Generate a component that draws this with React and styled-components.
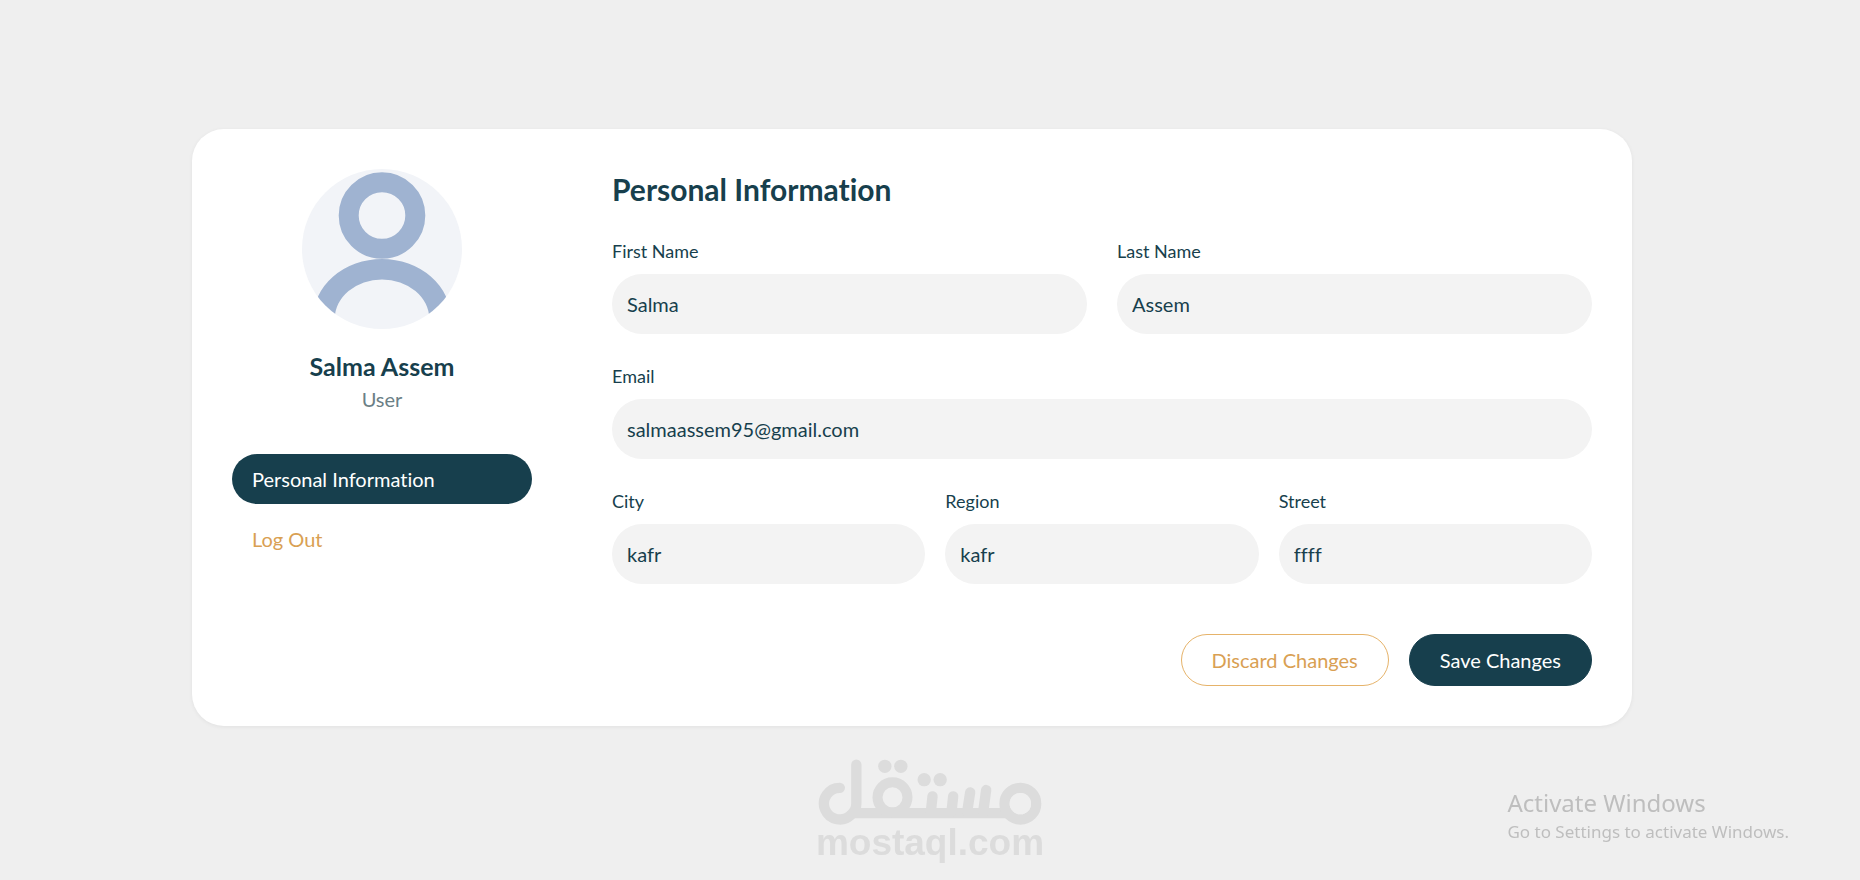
import React from "react";
import styled, { createGlobalStyle, css } from "styled-components";

const GlobalStyle = createGlobalStyle`
  *, *::before, *::after { box-sizing: border-box; }
  body {
    margin: 0;
    background: #efefef;
    color: #173f4d;
    font-family: Lato, "Liberation Sans", sans-serif;
    font-variant-ligatures: none;
  }
  button, input {
    font-family: inherit;
    font-variant-ligatures: inherit;
  }
`;

const Page = styled.main`
  min-height: 100vh;
  padding: 129px 36px 129px 0;
  display: flex;
  justify-content: center;
  align-items: flex-start;
`;

const Card = styled.section`
  display: flex;
  gap: 80px;
  width: 100%;
  max-width: 1440px;
  padding: 40px;
  background: #fff;
  border-radius: 32px;
  box-shadow: 0 1px 4px rgba(0, 0, 0, 0.06);
`;

const Sidebar = styled.aside`
  flex: 0 0 300px;
  display: flex;
  flex-direction: column;
  align-items: center;
`;

const Avatar = styled.svg`
  width: 160px;
  height: 160px;
  margin-bottom: 20px;
`;

const UserName = styled.h2`
  margin: 0;
  font-size: 25px;
  line-height: 35px;
  font-weight: 700;
`;

const UserRole = styled.p`
  margin: 0 0 40px;
  font-size: 20px;
  line-height: 30px;
  color: #6b7f86;
`;

const Nav = styled.nav`
  width: 100%;
  display: flex;
  flex-direction: column;
  gap: 10px;
`;

const NavButton = styled.button`
  height: 50px;
  padding: 0 20px;
  border: 0;
  border-radius: 25px;
  background: ${(p) => (p.$active ? "#173f4d" : "transparent")};
  color: ${(p) => (p.$active ? "#fff" : "#d9a053")};
  font-size: 20px;
  line-height: 30px;
  text-align: left;
  cursor: pointer;
`;

const Form = styled.form`
  flex: 1;
  min-width: 0;
  display: flex;
  flex-direction: column;
`;

const Title = styled.h1`
  margin: 0 0 30px;
  font-size: 30px;
  line-height: 40px;
  font-weight: 700;
`;

const Fields = styled.div`
  display: flex;
  flex-direction: column;
  gap: 30px;
`;

const FieldRow = styled.div`
  display: grid;
  grid-template-columns: repeat(${(p) => p.$columns}, minmax(0, 1fr));
  gap: ${(p) => p.$gap || 0}px;
`;

const Field = styled.div`
  display: flex;
  flex-direction: column;
  gap: 10px;
`;

const Label = styled.label`
  font-size: 18px;
  line-height: 25px;
`;

const Input = styled.input`
  width: 100%;
  height: 60px;
  padding: 0 15px;
  border: 0;
  border-radius: 30px;
  outline: 0;
  background: #f3f3f3;
  color: inherit;
  font-size: 20px;
  line-height: 30px;
`;

const Actions = styled.div`
  display: flex;
  justify-content: flex-end;
  gap: 20px;
  margin-top: 50px;
`;

const ActionButton = styled.button`
  height: 52px;
  padding: 0 30px;
  border: 1px solid #e6b36a;
  border-radius: 26px;
  background: #fff;
  color: #d9a053;
  font-size: 20px;
  line-height: 30px;
  cursor: pointer;
  ${(p) =>
    p.$primary &&
    css`
      border-color: #173f4d;
      background: #173f4d;
      color: #fff;
    `}
`;

const Watermark = styled.div`
  position: fixed;
  left: 0;
  right: 0;
  bottom: 19px;
  display: flex;
  flex-direction: column;
  align-items: center;
  color: #dcdcdc;
  pointer-events: none;
`;

const WatermarkLogo = styled.svg`
  width: 224px;
  height: 66px;
`;

const WatermarkText = styled.span`
  font: 700 37px/36px "Liberation Sans", sans-serif;
`;

const SystemNotice = styled.div`
  position: fixed;
  right: 71px;
  bottom: 35px;
  font-family: "Noto Sans", "Open Sans", sans-serif;
  color: #bebebe;
  pointer-events: none;
`;

const NoticeTitle = styled.p`
  margin: 0;
  font-size: 24px;
  line-height: 32px;
`;

const NoticeText = styled.p`
  margin: 0;
  font-size: 17px;
  line-height: 26px;
`;

function TextField({ id, label, type = "text", value }) {
  return (
    <Field>
      <Label htmlFor={id}>{label}</Label>
      <Input id={id} type={type} defaultValue={value} />
    </Field>
  );
}

function UserAvatar() {
  return (
    <Avatar viewBox="0 0 160 160" role="img" aria-label="Profile picture">
      <defs>
        <clipPath id="avatar-clip">
          <circle cx="80" cy="80" r="80" />
        </clipPath>
      </defs>
      <circle cx="80" cy="80" r="80" fill="#f2f4f8" />
      <g clipPath="url(#avatar-clip)">
        <circle cx="80" cy="46.5" r="33.3" fill="none" stroke="#9fb3d1" strokeWidth="20" />
        <path
          d="M11 150A69 60 0 0 1 149 150H127.300A47.300 39.600 0 0 0 32.700 150Z"
          fill="#9fb3d1"
        />
      </g>
    </Avatar>
  );
}

function MostaqlLogo() {
  return (
    <WatermarkLogo viewBox="54 56 669 198" aria-hidden="true">
      <g fill="none" stroke="currentColor" strokeWidth="31" strokeLinecap="round" strokeLinejoin="round">
        <path d="M118 142.500A47.500 47.500 0 1 0 152 223Q167.500 208 167.500 190V73" />
        <path d="M150 218.500H640" strokeLinecap="butt" />
        <circle cx="276" cy="171" r="45" strokeWidth="30" />
        <circle cx="659.500" cy="190" r="47.500" />
        <path d="M396 168L391 215M458 168L453 215M509 156L500 215M557 149L548 215" />
      </g>
      <g fill="currentColor">
        <circle cx="253" cy="78" r="20" />
        <circle cx="301" cy="78" r="20" />
        <circle cx="371" cy="118" r="20" />
        <circle cx="419" cy="118" r="20" />
      </g>
      <circle cx="659.500" cy="190" r="32" fill="#efefef" />
    </WatermarkLogo>
  );
}

export default function App() {
  return (
    <>
      <GlobalStyle />
      <Page>
        <Card>
          <Sidebar>
            <UserAvatar />
            <UserName>Salma Assem</UserName>
            <UserRole>User</UserRole>
            <Nav aria-label="Account">
              <NavButton type="button" $active>
                Personal Information
              </NavButton>
              <NavButton type="button">Log Out</NavButton>
            </Nav>
          </Sidebar>
          <Form onSubmit={(event) => event.preventDefault()}>
            <Title>Personal Information</Title>
            <Fields>
              <FieldRow $columns={2} $gap={30}>
                <TextField id="first-name" label="First Name" value="Salma" />
                <TextField id="last-name" label="Last Name" value="Assem" />
              </FieldRow>
              <FieldRow $columns={1}>
                <TextField id="email" label="Email" type="email" value="salmaassem95@gmail.com" />
              </FieldRow>
              <FieldRow $columns={3} $gap={20}>
                <TextField id="city" label="City" value="kafr" />
                <TextField id="region" label="Region" value="kafr" />
                <TextField id="street" label="Street" value="ffff" />
              </FieldRow>
            </Fields>
            <Actions>
              <ActionButton type="reset">Discard Changes</ActionButton>
              <ActionButton type="submit" $primary>
                Save Changes
              </ActionButton>
            </Actions>
          </Form>
        </Card>
      </Page>
      <Watermark>
        <MostaqlLogo />
        <WatermarkText>mostaql.com</WatermarkText>
      </Watermark>
      <SystemNotice>
        <NoticeTitle>Activate Windows</NoticeTitle>
        <NoticeText>Go to Settings to activate Windows.</NoticeText>
      </SystemNotice>
    </>
  );
}
